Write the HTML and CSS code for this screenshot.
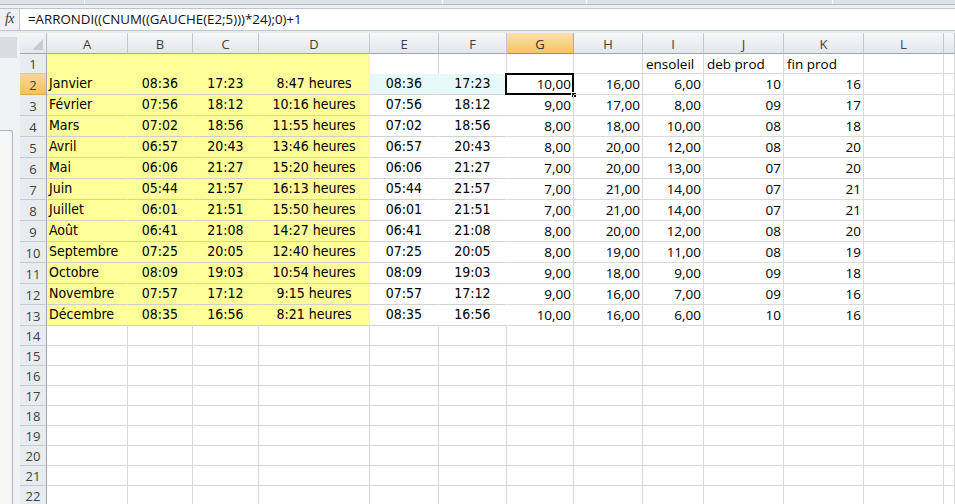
FILE: index.html
```html
<!DOCTYPE html>
<html lang="fr">
<head>
<meta charset="utf-8">
<title>Feuille</title>
<link rel="stylesheet" href="styles.css">
</head>
<body>
<div class="app">
  <div class="topstrip">
    <span class="tseg w1"></span><span class="tseg w2"></span><span class="tseg w3"></span><span class="tseg w4"></span><span class="tseg w5"></span>
  </div>
  <div class="gap1"></div>
  <div class="fbar">
    <div class="fx"><span class="fxg">fx</span></div>
    <div class="formula">=ARRONDI((CNUM((GAUCHE(E2;5)))*24);0)+1</div>
  </div>
  <div class="gap2"></div>
  <div class="main">
    <div class="side">
      <div class="side-tab"></div>
      <div class="side-box"></div>
    </div>
    <div class="sheet">
      <div class="corner"><span class="tri"></span></div>
      <div class="ch">A</div><div class="ch">B</div><div class="ch">C</div><div class="ch">D</div><div class="ch">E</div><div class="ch">F</div><div class="ch sel">G</div><div class="ch">H</div><div class="ch">I</div><div class="ch">J</div><div class="ch">K</div><div class="ch">L</div><div class="ch"></div>

      <div class="rh">1</div>
      <div class="c y r1"></div><div class="c y r1"></div><div class="c y r1"></div><div class="c y r1"></div>
      <div class="c r1e"></div><div class="c r1e"></div>
      <div class="c"></div><div class="c"></div>
      <div class="c cal">ensoleil</div><div class="c cal">deb prod</div><div class="c cal">fin prod</div>
      <div class="c"></div><div class="c"></div>

      <div class="rh sel">2</div>
      <div class="c y vt">Janvier</div><div class="c y vt m">08:36</div><div class="c y vt m">17:23</div><div class="c y vt m">8:47 heures</div>
      <div class="c e vt m cyan">08:36</div><div class="c e vt m cyan">17:23</div>
      <div class="c num active">10,00<span class="selbox"></span><span class="handle"></span></div><div class="c num">16,00</div><div class="c num">6,00</div><div class="c num">10</div><div class="c num">16</div>
      <div class="c"></div><div class="c"></div>

      <div class="rh">3</div>
      <div class="c y vt">Février</div><div class="c y vt m">07:56</div><div class="c y vt m">18:12</div><div class="c y vt m">10:16 heures</div>
      <div class="c e vt m">07:56</div><div class="c e vt m">18:12</div>
      <div class="c num">9,00</div><div class="c num">17,00</div><div class="c num">8,00</div><div class="c num">09</div><div class="c num">17</div>
      <div class="c"></div><div class="c"></div>

      <div class="rh">4</div>
      <div class="c y vt">Mars</div><div class="c y vt m">07:02</div><div class="c y vt m">18:56</div><div class="c y vt m">11:55 heures</div>
      <div class="c e vt m">07:02</div><div class="c e vt m">18:56</div>
      <div class="c num">8,00</div><div class="c num">18,00</div><div class="c num">10,00</div><div class="c num">08</div><div class="c num">18</div>
      <div class="c"></div><div class="c"></div>

      <div class="rh">5</div>
      <div class="c y vt">Avril</div><div class="c y vt m">06:57</div><div class="c y vt m">20:43</div><div class="c y vt m">13:46 heures</div>
      <div class="c e vt m">06:57</div><div class="c e vt m">20:43</div>
      <div class="c num">8,00</div><div class="c num">20,00</div><div class="c num">12,00</div><div class="c num">08</div><div class="c num">20</div>
      <div class="c"></div><div class="c"></div>

      <div class="rh">6</div>
      <div class="c y vt">Mai</div><div class="c y vt m">06:06</div><div class="c y vt m">21:27</div><div class="c y vt m">15:20 heures</div>
      <div class="c e vt m">06:06</div><div class="c e vt m">21:27</div>
      <div class="c num">7,00</div><div class="c num">20,00</div><div class="c num">13,00</div><div class="c num">07</div><div class="c num">20</div>
      <div class="c"></div><div class="c"></div>

      <div class="rh">7</div>
      <div class="c y vt">Juin</div><div class="c y vt m">05:44</div><div class="c y vt m">21:57</div><div class="c y vt m">16:13 heures</div>
      <div class="c e vt m">05:44</div><div class="c e vt m">21:57</div>
      <div class="c num">7,00</div><div class="c num">21,00</div><div class="c num">14,00</div><div class="c num">07</div><div class="c num">21</div>
      <div class="c"></div><div class="c"></div>

      <div class="rh">8</div>
      <div class="c y vt">Juillet</div><div class="c y vt m">06:01</div><div class="c y vt m">21:51</div><div class="c y vt m">15:50 heures</div>
      <div class="c e vt m">06:01</div><div class="c e vt m">21:51</div>
      <div class="c num">7,00</div><div class="c num">21,00</div><div class="c num">14,00</div><div class="c num">07</div><div class="c num">21</div>
      <div class="c"></div><div class="c"></div>

      <div class="rh">9</div>
      <div class="c y vt">Août</div><div class="c y vt m">06:41</div><div class="c y vt m">21:08</div><div class="c y vt m">14:27 heures</div>
      <div class="c e vt m">06:41</div><div class="c e vt m">21:08</div>
      <div class="c num">8,00</div><div class="c num">20,00</div><div class="c num">12,00</div><div class="c num">08</div><div class="c num">20</div>
      <div class="c"></div><div class="c"></div>

      <div class="rh">10</div>
      <div class="c y vt">Septembre</div><div class="c y vt m">07:25</div><div class="c y vt m">20:05</div><div class="c y vt m">12:40 heures</div>
      <div class="c e vt m">07:25</div><div class="c e vt m">20:05</div>
      <div class="c num">8,00</div><div class="c num">19,00</div><div class="c num">11,00</div><div class="c num">08</div><div class="c num">19</div>
      <div class="c"></div><div class="c"></div>

      <div class="rh">11</div>
      <div class="c y vt">Octobre</div><div class="c y vt m">08:09</div><div class="c y vt m">19:03</div><div class="c y vt m">10:54 heures</div>
      <div class="c e vt m">08:09</div><div class="c e vt m">19:03</div>
      <div class="c num">9,00</div><div class="c num">18,00</div><div class="c num">9,00</div><div class="c num">09</div><div class="c num">18</div>
      <div class="c"></div><div class="c"></div>

      <div class="rh">12</div>
      <div class="c y vt">Novembre</div><div class="c y vt m">07:57</div><div class="c y vt m">17:12</div><div class="c y vt m">9:15 heures</div>
      <div class="c e vt m">07:57</div><div class="c e vt m">17:12</div>
      <div class="c num">9,00</div><div class="c num">16,00</div><div class="c num">7,00</div><div class="c num">09</div><div class="c num">16</div>
      <div class="c"></div><div class="c"></div>

      <div class="rh">13</div>
      <div class="c y vt">Décembre</div><div class="c y vt m">08:35</div><div class="c y vt m">16:56</div><div class="c y vt m">8:21 heures</div>
      <div class="c e vt m">08:35</div><div class="c e vt m">16:56</div>
      <div class="c num">10,00</div><div class="c num">16,00</div><div class="c num">6,00</div><div class="c num">10</div><div class="c num">16</div>
      <div class="c"></div><div class="c"></div>

      <div class="rh">14</div><div class="c"></div><div class="c"></div><div class="c"></div><div class="c"></div><div class="c"></div><div class="c"></div><div class="c"></div><div class="c"></div><div class="c"></div><div class="c"></div><div class="c"></div><div class="c"></div><div class="c"></div>
      <div class="rh">15</div><div class="c"></div><div class="c"></div><div class="c"></div><div class="c"></div><div class="c"></div><div class="c"></div><div class="c"></div><div class="c"></div><div class="c"></div><div class="c"></div><div class="c"></div><div class="c"></div><div class="c"></div>
      <div class="rh">16</div><div class="c"></div><div class="c"></div><div class="c"></div><div class="c"></div><div class="c"></div><div class="c"></div><div class="c"></div><div class="c"></div><div class="c"></div><div class="c"></div><div class="c"></div><div class="c"></div><div class="c"></div>
      <div class="rh">17</div><div class="c"></div><div class="c"></div><div class="c"></div><div class="c"></div><div class="c"></div><div class="c"></div><div class="c"></div><div class="c"></div><div class="c"></div><div class="c"></div><div class="c"></div><div class="c"></div><div class="c"></div>
      <div class="rh">18</div><div class="c"></div><div class="c"></div><div class="c"></div><div class="c"></div><div class="c"></div><div class="c"></div><div class="c"></div><div class="c"></div><div class="c"></div><div class="c"></div><div class="c"></div><div class="c"></div><div class="c"></div>
      <div class="rh">19</div><div class="c"></div><div class="c"></div><div class="c"></div><div class="c"></div><div class="c"></div><div class="c"></div><div class="c"></div><div class="c"></div><div class="c"></div><div class="c"></div><div class="c"></div><div class="c"></div><div class="c"></div>
      <div class="rh">20</div><div class="c"></div><div class="c"></div><div class="c"></div><div class="c"></div><div class="c"></div><div class="c"></div><div class="c"></div><div class="c"></div><div class="c"></div><div class="c"></div><div class="c"></div><div class="c"></div><div class="c"></div>
      <div class="rh">21</div><div class="c"></div><div class="c"></div><div class="c"></div><div class="c"></div><div class="c"></div><div class="c"></div><div class="c"></div><div class="c"></div><div class="c"></div><div class="c"></div><div class="c"></div><div class="c"></div><div class="c"></div>
      <div class="rh">22</div><div class="c"></div><div class="c"></div><div class="c"></div><div class="c"></div><div class="c"></div><div class="c"></div><div class="c"></div><div class="c"></div><div class="c"></div><div class="c"></div><div class="c"></div><div class="c"></div><div class="c"></div>
    </div>
  </div>
</div>
</body>
</html>
```

FILE: styles.css
```css
* { box-sizing: border-box; }
html, body { margin: 0; padding: 0; }
body { width: 955px; height: 504px; overflow: hidden; background: #ffffff; font-family: "Open Sans", sans-serif; }

.app { width: 955px; height: 504px; display: flex; flex-direction: column; overflow: hidden; }

.topstrip { height: 5px; display: flex; background: #dfe3e8; border-bottom: 1px solid #b4b9c0; flex: none; }
.tseg { height: 100%; border-right: 1px solid #f7f8fa; }
.w1 { width: 85px; } .w2 { width: 358px; } .w3 { width: 144px; } .w4 { width: 246px; } .w5 { flex: 1; border-right: 0; }
.gap1 { height: 3px; background: #eef0f3; flex: none; }

.fbar { height: 23px; display: flex; border-top: 1px solid #bfc4ca; border-bottom: 1px solid #bfc4ca; background: #fff; flex: none; }
.fx { width: 20px; background: #eef0f3; border-right: 1px solid #c6cacf; display: flex; align-items: center; justify-content: center; }
.fxg { font-family: "Liberation Serif", serif; font-style: italic; font-size: 14px; color: #3a3a3a; letter-spacing: -0.5px; margin-top: -1px; }
.formula { padding-left: 8px; font-size: 13.3px; line-height: 21px; color: #111; white-space: nowrap; }
.gap2 { height: 2px; background: #e9ebee; flex: none; }

.main { flex: 1; display: flex; min-height: 0; }
.side { width: 20px; flex: none; background: #f1f2f4; display: flex; flex-direction: column; padding-top: 4px; }
.side-tab { width: 17px; height: 21px; background: #d9dce0; flex: none; }
.side-box { margin-top: 72px; width: 13px; flex: 1; border-top: 1px solid #aeb3b9; border-right: 1px solid #aeb3b9; border-top-right-radius: 3px; background: #f6f6f6; }

.sheet {
  flex: 1;
  display: grid;
  grid-template-columns: 27px 81px 65px 66px 111px 69px 68px 67px 69px 61px 80px 80px 80px 1fr;
  grid-template-rows: 21px 20px repeat(12, 21px) repeat(9, 20px);
  overflow: hidden;
}

.corner { background: linear-gradient(#f4f5f7, #e4e7eb); border-right: 1px solid #b7bcc3; border-bottom: 1px solid #9fa6ae; position: relative; }
.tri { position: absolute; right: 3px; bottom: 3px; width: 0; height: 0; border-left: 11px solid transparent; border-bottom: 11px solid #c9cdd2; }

.ch { background: linear-gradient(#f6f7f9, #e3e6ea); border-right: 1px solid #c3c8ce; border-bottom: 1px solid #9fa6ae; display: flex; align-items: center; justify-content: center; font-size: 13px; color: #3f3f3f; padding-top: 1px; }
.ch.sel { background: linear-gradient(#fbe3ad, #f2c461); border-right-color: #d9a94c; border-bottom-color: #c28a2c; color: #333; }

.rh { background: #e8ebef; border-right: 1px solid #9fa6ae; border-bottom: 1px solid #c6cbd1; display: flex; align-items: flex-end; justify-content: center; font-size: 13px; color: #3f3f3f; line-height: 16px; padding-bottom: 1px; }
.rh.sel { background: linear-gradient(#f9d895, #f3c25e); border-bottom-color: #d9a94c; }

.c { border-right: 1px solid #d9d9d9; border-bottom: 1px solid #d9d9d9; display: flex; align-items: flex-end; white-space: nowrap; overflow: visible; position: relative; font-size: 13.5px; line-height: 16px; padding: 0 3px 2px 3px; color: #000; min-width: 0; }

.y { background: #ffff99; border-right-color: transparent; border-bottom-color: #d0d0c4; }
.y.r1 { border-bottom-color: transparent; }
.r1e { border-bottom-color: transparent; }
.e { border-right-color: transparent; border-bottom-color: #d2d2d2; }
.cyan { background: #e6f8f8; }

.vt { font-family: "DejaVu Sans Condensed", "DejaVu Sans", sans-serif; font-stretch: condensed; font-size: 14px; line-height: 18px; padding-bottom: 2px; padding-left: 2px; }
.m { justify-content: center; padding-left: 0; padding-right: 0; }

.num { justify-content: flex-end; padding-right: 2px; }
.cal { padding-left: 3px; padding-bottom: 1px; }

.active { overflow: visible; }
.selbox { position: absolute; left: -2px; top: -1px; right: -1px; bottom: -1px; border: 2px solid #000; pointer-events: none; }
.handle { position: absolute; right: -4px; bottom: -4px; width: 6px; height: 6px; background: #000; border: 1px solid #fff; }
```
